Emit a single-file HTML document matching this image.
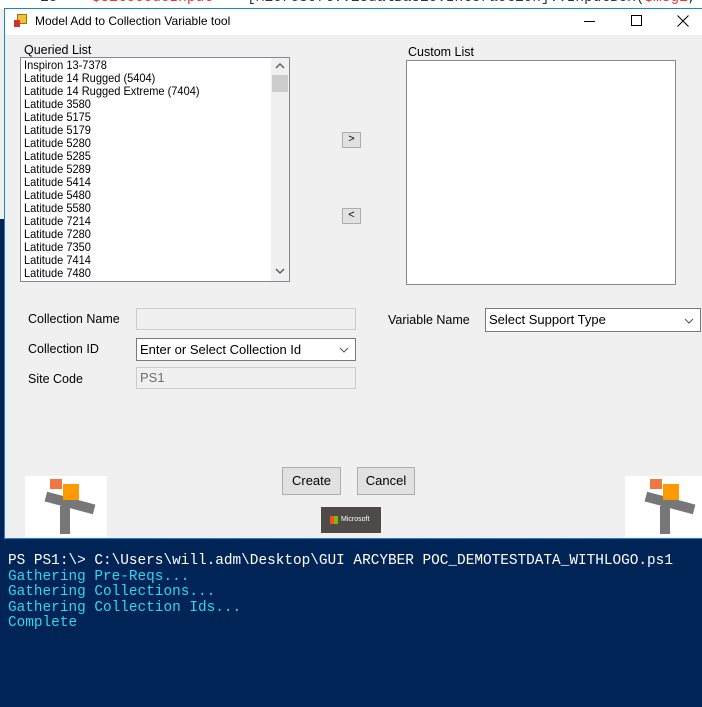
<!DOCTYPE html><html><head><style>
*{margin:0;padding:0;box-sizing:border-box}
body{width:702px;height:707px;overflow:hidden;background:#012456;position:relative;font-family:"Liberation Sans",sans-serif}
.a{position:absolute}
.t{font-size:12.5px;color:#000}
.li{font-size:12px;line-height:13px;white-space:nowrap;transform:scaleX(0.92);transform-origin:0 0}
.btn{position:absolute;background:#e1e1e1;border:1px solid #adadad;font-size:13px;text-align:center}
.inp{position:absolute;background:#f0f0f0;border:1px solid #ccc;font-size:13px;color:#6d6d6d;padding:2px 3px}
.cb{position:absolute;background:#fff;border:1px solid #7a7a7a;font-size:13px;padding:3px 3px}
.ps{font-family:"Liberation Mono",monospace;font-size:14.4px;line-height:15.5px;white-space:pre}
</style></head><body>
<div class="a" style="left:0;top:0;width:702px;height:9px;background:#fff;overflow:hidden"><div class="ps" style="position:absolute;top:-9px;left:40px;color:#333">13    <span style="color:#e33">$siteCodeInput</span>    [Microsoft.VisualBasic.Interaction]::InputBox(<span style="color:#e33">$msg1</span>, <span style="color:#e33">$tit</span></div></div>
<div class="a" style="left:0;top:9px;width:5px;height:210px;background:#f0f0f0"></div>
<div class="a" style="left:4px;top:8px;width:698px;height:531px;border:1px solid #1883d7;border-right:none;background:#f0f0f0"></div>
<div class="a" style="left:5px;top:9px;width:697px;height:26px;background:#fff"></div>
<div class="a" style="left:14px;top:14px;width:14px;height:14px"><div class="a" style="left:3px;top:0;width:10px;height:10px;background:#f3c030;border:1px solid #a07010"></div><div class="a" style="left:0;top:6px;width:6px;height:7px;background:#d03030"></div></div>
<div class="a t" style="left:35px;top:14px;font-size:12px">Model Add to Collection Variable tool</div>
<div class="a" style="left:584px;top:21px;width:11px;height:1px;background:#000"></div>
<div class="a" style="left:631px;top:15px;width:11px;height:11px;border:1px solid #000"></div>
<svg class="a" style="left:677px;top:15px" width="12" height="12"><path d="M0.5 0.5L11.5 11.5M11.5 0.5L0.5 11.5" stroke="#000" stroke-width="1"/></svg>
<div class="a t" style="left:24px;top:43px">Queried List</div>
<div class="a t" style="left:408px;top:45px">Custom List</div>
<div class="a" style="left:20px;top:57px;width:270px;height:225px;background:#fff;border:1px solid #828790;overflow:hidden">
<div class="li" style="position:absolute;left:3px;top:1px">Inspiron 13-7378<br>Latitude 14 Rugged (5404)<br>Latitude 14 Rugged Extreme (7404)<br>Latitude 3580<br>Latitude 5175<br>Latitude 5179<br>Latitude 5280<br>Latitude 5285<br>Latitude 5289<br>Latitude 5414<br>Latitude 5480<br>Latitude 5580<br>Latitude 7214<br>Latitude 7280<br>Latitude 7350<br>Latitude 7414<br>Latitude 7480</div>
<div class="a" style="left:250px;top:0;width:18px;height:223px;background:#f0f0f0"></div>
<div class="a" style="left:251px;top:17px;width:16px;height:17px;background:#cdcdcd"></div>
<svg class="a" style="left:254px;top:5px" width="10" height="6"><path d="M1 5L5 1L9 5" stroke="#606060" fill="none" stroke-width="1.5"/></svg>
<svg class="a" style="left:254px;top:210px" width="10" height="6"><path d="M1 1L5 5L9 1" stroke="#606060" fill="none" stroke-width="1.5"/></svg>
</div>
<div class="a" style="left:406px;top:60px;width:270px;height:225px;background:#fff;border:1px solid #828790"></div>
<div class="btn" style="left:342px;top:132px;width:19px;height:16px;font-size:11px;line-height:13px">&gt;</div>
<div class="btn" style="left:342px;top:208px;width:19px;height:16px;font-size:11px;line-height:13px">&lt;</div>
<div class="a t" style="left:28px;top:312px">Collection Name</div>
<div class="a t" style="left:28px;top:342px">Collection ID</div>
<div class="a t" style="left:28px;top:372px">Site Code</div>
<div class="a t" style="left:388px;top:313px">Variable Name</div>
<div class="inp" style="left:136px;top:308px;width:220px;height:22px"></div>
<div class="cb" style="left:136px;top:338px;width:220px;height:23px">Enter or Select Collection Id<svg style="position:absolute;right:6px;top:8px" width="10" height="6"><path d="M1 1L5 5L9 1" stroke="#555" fill="none"/></svg></div>
<div class="inp" style="left:136px;top:367px;width:220px;height:22px">PS1</div>
<div class="cb" style="left:485px;top:308px;width:216px;height:24px">Select Support Type<svg style="position:absolute;right:6px;top:9px" width="10" height="6"><path d="M1 1L5 5L9 1" stroke="#555" fill="none"/></svg></div>
<div class="btn" style="left:282px;top:467px;width:59px;height:28px;line-height:26px">Create</div>
<div class="btn" style="left:357px;top:467px;width:58px;height:28px;line-height:26px">Cancel</div>
<div class="a" style="left:25px;top:476px;width:82px;height:61px;background:#fff"><div class="a" style="left:20px;top:22px;width:50px;height:10px;background:#777;transform:rotate(15deg)"></div><div class="a" style="left:25px;top:3px;width:12px;height:10px;background:#e74"></div><div class="a" style="left:38px;top:8px;width:16px;height:16px;background:#f90"></div><div class="a" style="left:35px;top:30px;width:10px;height:28px;background:#777"></div></div>
<div class="a" style="left:625px;top:476px;width:77px;height:61px;background:#fff"><div class="a" style="left:20px;top:22px;width:50px;height:10px;background:#777;transform:rotate(15deg)"></div><div class="a" style="left:25px;top:3px;width:12px;height:10px;background:#e74"></div><div class="a" style="left:38px;top:8px;width:16px;height:16px;background:#f90"></div><div class="a" style="left:35px;top:30px;width:10px;height:28px;background:#777"></div></div>
<div class="a" style="left:321px;top:507px;width:60px;height:26px;background:#4d4a48;color:#fff;font-size:7px;line-height:26px;padding-left:20px">Microsoft</div>
<div class="a" style="left:330px;top:516px;width:8px;height:8px;background:linear-gradient(90deg,#f25022 50%,#7fba00 50%)"></div>
<div class="a ps" style="left:8px;top:554px;color:#fff">PS PS1:\&gt; C:\Users\will.adm\Desktop\GUI ARCYBER POC_DEMOTESTDATA_WITHLOGO.ps1
<span style="color:#2fd6f2">Gathering Pre-Reqs...
Gathering Collections...
Gathering Collection Ids...
Complete</span></div>
</body></html>
